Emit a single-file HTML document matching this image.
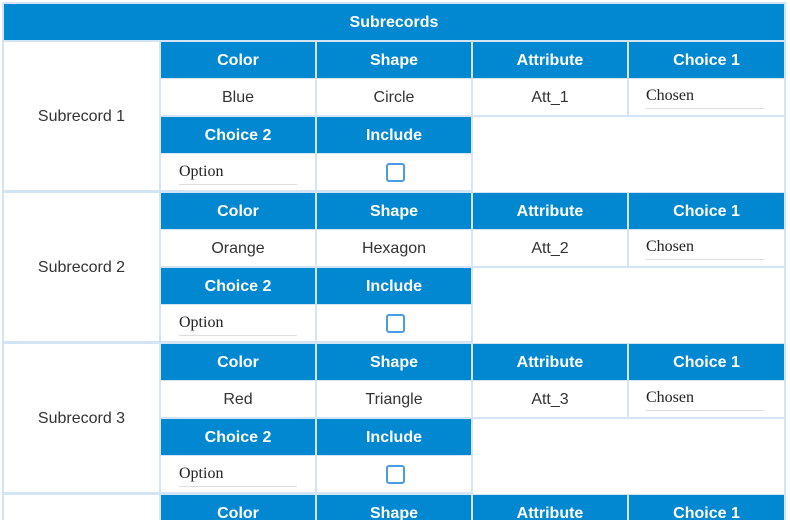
<!DOCTYPE html><html><head><style>
html{height:520px;overflow:hidden}
body{margin:0;width:790px;height:520px;overflow:hidden;background:#fff;font-family:"Liberation Sans",Arial,sans-serif;position:relative}
.bg{position:absolute;left:2px;top:2px;width:784px;height:518px;background:#d3e5f4}
div.c{position:absolute;display:flex;align-items:center;justify-content:center;font-size:16px;color:#333;background:#fff;padding-top:2px;box-sizing:border-box}
div.h{background:#0288d1;color:#fff;font-weight:bold}
.in{position:absolute;font-family:"Liberation Serif",serif;font-size:16px;color:#222;border-bottom:1px solid #ddd;width:118px;height:22px;line-height:20px}
.cb{position:absolute;width:15px;height:15px;border:2px solid #4a9be0;border-radius:3px;background:#fff}
</style></head><body>
<div class="bg"></div>
<div class="c h" style="left:4px;top:4px;width:780px;height:36px">Subrecords</div>
<div id="r"></div>
<script>
var d=[["Subrecord 1","Blue","Circle","Att_1"],["Subrecord 2","Orange","Hexagon","Att_2"],["Subrecord 3","Red","Triangle","Att_3"],["","","",""]];
var h="",X=[161,317,473,629],W=[154,154,154,155];
function c(x,y,w,hh,t,cl){return '<div class="c '+(cl||'')+'" style="left:'+x+'px;top:'+y+'px;width:'+w+'px;height:'+hh+'px">'+t+'</div>';}
d.forEach(function(r,i){var T=41+151*i;
h+=c(4,T+1,155,148,r[0]);
var H=["Color","Shape","Attribute","Choice 1"];
for(var j=0;j<4;j++){h+=c(X[j],T+1,W[j],36,H[j],'h');h+=c(X[j],T+38,W[j],36,j<3?r[j+1]:'');}
h+='<div class="in" style="left:646px;top:'+(T+45)+'px">Chosen</div>';
h+=c(473,T+76,311,75,'');
h+=c(161,T+76,154,36,'Choice 2','h');h+=c(317,T+76,154,36,'Include','h');
h+=c(161,T+113,154,36,'');h+=c(317,T+113,154,36,'');
h+='<div class="in" style="left:179px;top:'+(T+121)+'px">Option</div>';
h+='<div class="cb" style="left:386px;top:'+(T+122)+'px"></div>';
});
document.getElementById('r').innerHTML=h;
</script>
</body></html>
